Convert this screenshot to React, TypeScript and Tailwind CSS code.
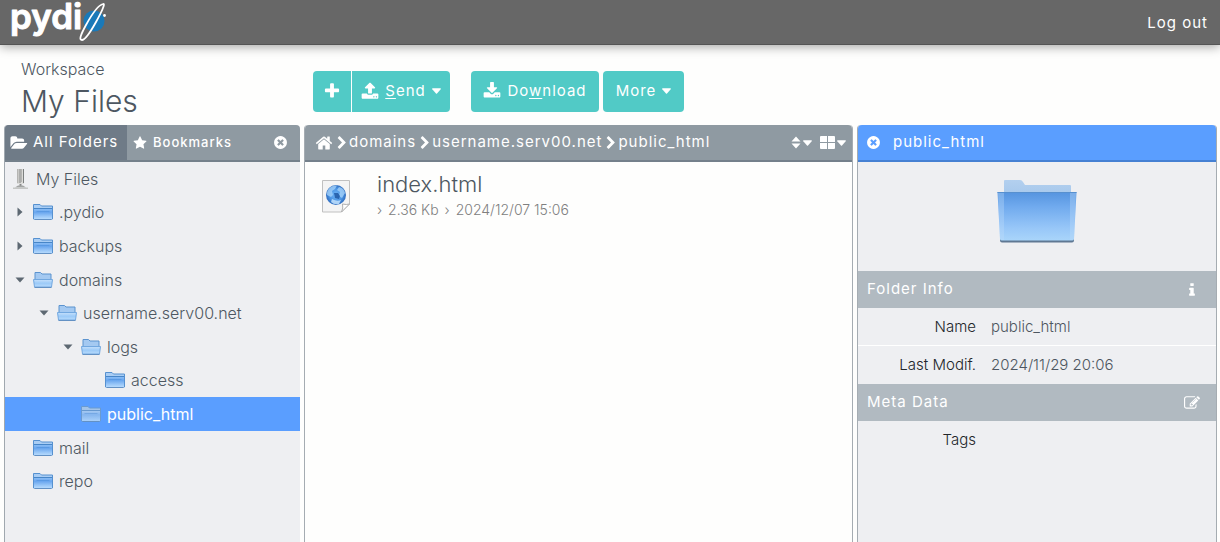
import type { ReactNode } from "react";

const PATHS = {
  plus: "M1600 736v192q0 40-28 68t-68 28h-416v416q0 40-28 68t-68 28h-192q-40 0-68-28t-28-68v-416h-416q-40 0-68-28t-28-68v-192q0-40 28-68t68-28h416v-416q0-40 28-68t68-28h192q40 0 68 28t28 68v416h416q40 0 68 28t28 68z",
  upload:
    "M1344 1472q0-26-19-45t-45-19-45 19-19 45 19 45 45 19 45-19 19-45zm256 0q0-26-19-45t-45-19-45 19-19 45 19 45 45 19 45-19 19-45zm128-224v320q0 40-28 68t-68 28h-1472q-40 0-68-28t-28-68v-320q0-40 28-68t68-28h427q21 56 70.5 92t110.5 36h256q61 0 110.5-36t70.5-92h427q40 0 68 28t28 68zm-325-648q-17 40-59 40h-256v448q0 26-19 45t-45 19h-256q-26 0-45-19t-19-45v-448h-256q-42 0-59-40-17-39 14-69l448-448q18-19 45-19t45 19l448 448q31 30 14 69z",
  download:
    "M1344 1344q0-26-19-45t-45-19-45 19-19 45 19 45 45 19 45-19 19-45zm256 0q0-26-19-45t-45-19-45 19-19 45 19 45 45 19 45-19 19-45zm128-224v320q0 40-28 68t-68 28h-1472q-40 0-68-28t-28-68v-320q0-40 28-68t68-28h465l135 136q58 56 136 56t136-56l136-136h464q40 0 68 28t28 68zm-325-569q17 41-14 70l-448 448q-18 19-45 19t-45-19l-448-448q-31-29-14-70 17-39 59-39h256v-448q0-26 19-45t45-19h256q26 0 45 19t19 45v448h256q42 0 59 39z",
  home: "M1472 992v480q0 26-19 45t-45 19h-384v-384h-256v384h-384q-26 0-45-19t-19-45v-480q0-1 .5-3t.5-3l575-474 575 474q1 2 1 6zm223-69l-62 74q-8 9-21 11h-3q-13 0-21-7l-692-577-692 577q-12 8-24 7-13-2-21-11l-62-74q-8-10-7-23.5t11-21.5l719-599q32-26 76-26t76 26l244 204v-195q0-14 9-23t23-9h192q14 0 23 9t9 23v408l219 182q10 8 11 21.5t-7 23.5z",
  close:
    "M1277 1122q0-26-19-45l-181-181 181-181q19-19 19-45 0-27-19-46l-90-90q-19-19-46-19-26 0-45 19l-181 181-181-181q-19-19-45-19-27 0-46 19l-90 90q-19 19-19 46 0 26 19 45l181 181-181 181q-19 19-19 45 0 27 19 46l90 90q19 19 46 19 26 0 45-19l181-181 181 181q19 19 45 19 27 0 46-19l90-90q19-19 19-46zm387-226q0 209-103 385.5t-279.5 279.5-385.5 103-385.5-103-279.5-279.5-103-385.5 103-385.5 279.5-279.5 385.5-103 385.5 103 279.5 279.5 103 385.5z",
  edit: "M888 1184l116-116-152-152-116 116v56h96v96h56zm440-720q-16-16-33 1l-350 350q-17 17-1 33t33-1l350-350q17-17 1-33zm80 594v190q0 119-84.5 203.5t-203.5 84.5h-832q-119 0-203.5-84.5t-84.5-203.5v-832q0-119 84.5-203.5t203.5-84.5h832q63 0 117 25 15 7 18 23 3 17-9 29l-49 49q-14 14-32 8-23-6-45-6h-832q-66 0-113 47t-47 113v832q0 66 47 113t113 47h832q66 0 113-47t47-113v-126q0-13 9-22l64-64q15-15 35-7t20 29zm-96-738l288 288-672 672h-288v-288zm444 132l-92 92-288-288 92-92q28-28 68-28t68 28l152 152q28 28 28 68t-28 68z",
  folderOpen:
    "M1815 952q0 31-31 66l-336 396q-43 51-120.5 86.5t-143.5 35.5h-1088q-34 0-60.5-13t-26.5-43q0-31 31-66l336-396q43-51 120.5-86.5t143.5-35.5h1088q34 0 60.5 13t26.5 43zm-343-344v160h-832q-94 0-197 47.5t-164 119.5l-337 396-5 6q0-4-.5-12.5t-.5-12.5v-960q0-92 66-158t158-66h320q92 0 158 66t66 158v32h544q92 0 158 66t66 158z",
  star: "M1728 647q0 22-26 48l-363 354 86 500q1 7 1 20 0 21-10.5 35.5t-30.5 14.5q-19 0-40-12l-449-236-449 236q-22 12-40 12-21 0-31.5-14.5t-10.5-35.5q0-6 2-20l86-500-364-354q-25-27-25-48 0-37 56-46l502-73 225-455q19-41 49-41t49 41l225 455 502 73q56 9 56 46z",
  chevron:
    "M1363 877l-742 742q-19 19-45 19t-45-19l-166-166q-19-19-19-45t19-45l531-531-531-531q-19-19-19-45t19-45l166-166q19-19 45-19t45 19l742 742q19 19 19 45t-19 45z",
  info: "M1216 1344v128q0 26-19 45t-45 19h-512q-26 0-45-19t-19-45v-128q0-26 19-45t45-19h64v-384h-64q-26 0-45-19t-19-45v-128q0-26 19-45t45-19h384q26 0 45 19t19 45v576h64q26 0 45 19t19 45zm-128-1152v192q0 26-19 45t-45 19h-256q-26 0-45-19t-19-45v-192q0-26 19-45t45-19h256q26 0 45 19t19 45z",
};

function Icon({ name, className = "size-4" }: { name: keyof typeof PATHS; className?: string }) {
  return (
    <svg viewBox="0 0 1792 1792" fill="currentColor" aria-hidden="true" className={`shrink-0 overflow-visible ${className}`}>
      <path d={PATHS[name]} />
    </svg>
  );
}

function Caret() {
  return (
    <svg viewBox="0 0 9 6" fill="currentColor" aria-hidden="true" className="h-[6px] w-[9px] shrink-0">
      <path d="M.6.3h7.8q.8.3.3 1L5 5.400q-.5.500-1 0L.3 1.300Q-.2.600.6.300z" />
    </svg>
  );
}

function Logo() {
  return (
    <svg viewBox="0 0 100 40" className="h-10 w-[100px] overflow-visible" role="img" aria-label="pydio">
      <text
        x="2"
        y="27"
        fontFamily="Inter, sans-serif"
        fontWeight="600"
        fontSize="35"
        fill="#fff"
        stroke="#fff"
        strokeWidth="1"
        strokeLinejoin="round"
      >
        pydi
      </text>
      <circle cx="86" cy="19" r="10.5" fill="#1a79b8" />
      <g fill="none" stroke="#fff" strokeWidth="1.8">
        <path d="M95 2C91 3 84 12 78 23S71 38 74 38s9-9 14-18S98 1 95 2z" />
      </g>
      <circle cx="96.5" cy="13.5" r="1.4" fill="#fff" />
    </svg>
  );
}

function SmallFolder({ open = false, faded = false }: { open?: boolean; faded?: boolean }) {
  return (
    <svg viewBox="0 0 20 18" aria-hidden="true" className="h-[18px] w-5 shrink-0">
      <defs>
        <linearGradient id="small-front" x1="0" y1="0" x2="0" y2="1">
          <stop offset="0" stopColor="#8fc0f6" />
          <stop offset=".35" stopColor="#68a5ee" />
          <stop offset=".8" stopColor="#9fcbf9" />
          <stop offset="1" stopColor="#b4d9fd" />
        </linearGradient>
        <linearGradient id="small-faded" x1="0" y1="0" x2="0" y2="1">
          <stop offset="0" stopColor="#a9cbf2" />
          <stop offset=".4" stopColor="#86b6ef" />
          <stop offset="1" stopColor="#a9d0f9" />
        </linearGradient>
        <linearGradient id="small-open" x1="0" y1="0" x2="0" y2="1">
          <stop offset="0" stopColor="#c6e0fb" />
          <stop offset=".5" stopColor="#9bcaf8" />
          <stop offset="1" stopColor="#b9dbfc" />
        </linearGradient>
      </defs>
      {open ? (
        <>
          <path d="M2 9V1.500h5.500l1.500 1.500H18v6z" fill="#a4c9f1" stroke="#5b93cf" />
          <path d="M.5 8.500h19L18.500 16h-17z" fill="url(#small-open)" stroke="#72a8e0" />
        </>
      ) : (
        <>
          <path
            d="M.5 16V1.500h6.500l1.500 1.500h11V16z"
            fill={faded ? "#a3c4ea" : "#a9cdf4"}
            stroke={faded ? "#6b9bd0" : "#5691d0"}
          />
          <path d="M1 5.500h18V16H1z" fill={faded ? "url(#small-faded)" : "url(#small-front)"} />
          <path d="M1 5.500h18" stroke={faded ? "#6799d0" : "#4786c8"} />
          <path d="M3.500 8.500h13" stroke={faded ? "#75a8e4" : "#5a9ae4"} />
        </>
      )}
      <path d="M1.500 16.500h17" stroke="#6391c4" />
    </svg>
  );
}

function LargeFolder() {
  return (
    <svg viewBox="0 0 80 65" role="img" aria-label="Folder" className="h-[65px] w-20">
      <defs>
        <linearGradient id="large-back" x1="0" y1="0" x2="0" y2="1">
          <stop offset="0" stopColor="#b3d0ef" />
          <stop offset="1" stopColor="#83b1e3" />
        </linearGradient>
        <linearGradient id="large-front" x1="0" y1="0" x2="0" y2="1">
          <stop offset="0" stopColor="#5594df" />
          <stop offset=".3" stopColor="#70aaee" />
          <stop offset=".75" stopColor="#98c7f8" />
          <stop offset="1" stopColor="#a9d5fa" />
        </linearGradient>
      </defs>
      <path d="M3 60h74v1.500q0 2-2 2H5q-2 0-2-2z" fill="#5f7893" />
      <path d="M7 60V2q0-1 1-1h15q2 0 3 2l2 3h45q1 0 1 1v53z" fill="url(#large-back)" />
      <path d="M.5 13h79L77 60q0 1.500-2 1.500H5q-2 0-2-1.500z" fill="url(#large-front)" />
      <path d="M1 14h6v47H5q-2 0-2-2zM73 14h6l-2 45q0 2-2 2h-2z" fill="#c1def9" opacity=".35" />
      <path d="M.5 13.500h79" stroke="#5790cf" />
    </svg>
  );
}

function DriveIcon() {
  return (
    <svg viewBox="0 0 15 22" aria-hidden="true" className="h-[22px] w-[15px] shrink-0">
      <path d="M4 1h7v15H4z" fill="#dcdcda" />
      <path d="M4 1h1.500v14H4zM8 1h1v13H8z" fill="#b5b5b3" />
      <path d="M6.500 1h1v14h-1zM10 1h1v14h-1z" fill="#7c7f7f" />
      <path d="M6.500 16h2v3h-2z" fill="#888" />
      <path d="M5 17.500h5l3 2H2z" fill="#a2a4a3" />
      <path d="M0 19.500h15V21H0z" fill="#c5c6c5" />
    </svg>
  );
}

function WebFileIcon() {
  return (
    <svg viewBox="0 0 30 34" aria-hidden="true" className="h-[34px] w-[30px] shrink-0">
      <defs>
        <radialGradient id="globe" cx=".5" cy=".5" r=".55">
          <stop offset="0" stopColor="#6fb6f8" />
          <stop offset=".6" stopColor="#4b93e2" />
          <stop offset="1" stopColor="#2560b4" />
        </radialGradient>
      </defs>
      <path d="M1.500 1.500h27V25l-8 8h-19z" fill="#f4f4f4" stroke="#c0c0c0" />
      <path d="M28.500 25q-3 1-7 0 1 4-1 8z" fill="#fff" stroke="#b0b0b0" />
      <circle cx="15" cy="16" r="10" fill="url(#globe)" />
      <path d="M7 11q3-5 9-4.500l-2 3.500-3 2 1 4-2 2-4-2q-.5-3 1-5zM18 8q5 1 6 6l-3 5-3-2 1-4-3-2z" fill="#a9d5fb" opacity=".75" />
      <path d="M11 20q5 3 9 1l-2 4q-5 1-8-2z" fill="#cbe7ff" opacity=".8" />
      <path d="M13 14h4l2 3-1 3-4-1z" fill="#1b529f" opacity=".8" />
    </svg>
  );
}

function ToolButton({ children, className = "" }: { children: ReactNode; className?: string }) {
  return (
    <button
      type="button"
      className={`flex h-[41px] items-center justify-center gap-1.5 bg-[#51cac6] text-[15px] tracking-[1px] text-white ${className}`}
    >
      {children}
    </button>
  );
}

type Node = { label: string; depth: number; state?: "open" | "closed"; selected?: boolean };

const NODES: Node[] = [
  { label: ".pydio", depth: 0, state: "closed" },
  { label: "backups", depth: 0, state: "closed" },
  { label: "domains", depth: 0, state: "open" },
  { label: "username.serv00.net", depth: 1, state: "open" },
  { label: "logs", depth: 2, state: "open" },
  { label: "access", depth: 3 },
  { label: "public_html", depth: 2, selected: true },
  { label: "mail", depth: 0 },
  { label: "repo", depth: 0 },
];

const INDENT = ["pl-2.5", "pl-[34px]", "pl-[58px]", "pl-[82px]"];

function TreeRow({ node }: { node: Node }) {
  return (
    <li className={`flex items-center ${INDENT[node.depth]} ${node.selected ? "bg-[#5a9eff] font-normal text-white" : ""}`}>
      <span className="flex w-[18px] shrink-0">
        {node.state && (
          <svg viewBox="0 0 10 10" fill="#5d6872" aria-hidden="true" className="size-2.5">
            {node.state === "open" ? <path d="M.5 2.500h9L5 7.500z" /> : <path d="M2.500.5v9L7.500 5z" />}
          </svg>
        )}
      </span>
      <SmallFolder open={node.state === "open"} faded={node.selected} />
      <span className="ml-1.5">{node.label}</span>
    </li>
  );
}

const BAR = "flex h-[37px] shrink-0 items-center rounded-t-sm border-b-2 text-white tracking-[1px]";

function SectionBar({ title, children }: { title: string; children: ReactNode }) {
  return (
    <div className="flex h-[37px] items-center justify-between bg-[#b1bac1] pr-3.5 pl-[9px] text-white">
      <h2 className="text-[15px] tracking-[1px]">{title}</h2>
      <span className="flex min-w-5 justify-center">{children}</span>
    </div>
  );
}

function Field({ label, value }: { label: string; value?: string }) {
  return (
    <div className="flex h-[38px] items-center gap-[15px] border-b border-white pt-px text-[15px] font-light last:border-b-0">
      <dt className="w-[118px] text-right text-[#22262a]">{label}</dt>
      <dd className="text-[#4d5660]">{value}</dd>
    </div>
  );
}

export default function App() {
  return (
    <div className="flex min-h-screen flex-col bg-[#fefefd] font-['Inter','Noto_Sans',sans-serif] text-base text-[#4d5761]">
      <header className="flex h-[45px] shrink-0 items-center justify-between border-b border-[#555] bg-[#676767] pr-3 pl-2 shadow-[0_2px_10px_rgba(0,0,0,0.35)]">
        <Logo />
        <a href="#logout" className="pt-0.5 text-[15px] tracking-[1px] text-white">
          Log out
        </a>
      </header>

      <div className="flex h-20 shrink-0 items-center pl-[21px]">
        <div className="w-[292px] pt-2 font-light">
          <p className="text-base leading-6">Workspace</p>
          <h1 className="text-[30px] leading-10">My Files</h1>
        </div>
        <div className="flex pt-3">
          <ToolButton className="mr-px w-[38px] rounded-l-sm">
            <Icon name="plus" className="size-[18px]" />
          </ToolButton>
          <ToolButton className="w-[98px] rounded-r-sm">
            <Icon name="upload" className="size-[18px]" />
            <span>
              <u className="underline-offset-2">S</u>end
            </span>
            <Caret />
          </ToolButton>
          <ToolButton className="ml-[21px] w-32 rounded-sm">
            <Icon name="download" className="size-[18px]" />
            <span>
              Do<u className="underline-offset-2">w</u>nload
            </span>
          </ToolButton>
          <ToolButton className="ml-1 w-[81px] rounded-sm">
            More
            <Caret />
          </ToolButton>
        </div>
      </div>

      <main className="grid flex-1 grid-cols-[296px_minmax(0,1fr)_360px] gap-1 pr-[3px] pl-1">
        <aside className="flex flex-col rounded-t-sm border-l border-[#a0a8af] bg-[#eeeff2]">
          <div className={`${BAR} border-[#74808b] bg-[#8f9aa2]`}>
            <button type="button" className="flex h-full w-[122px] items-center gap-1.5 rounded-tl-sm bg-[#6f7b87] pl-1.5 text-[15px]">
              <Icon name="folderOpen" />
              All Folders
            </button>
            <button type="button" className="flex flex-1 items-center gap-1.5 pl-1.5 text-[13px] font-medium">
              <Icon name="star" className="size-3.5" />
              Bookmarks
            </button>
            <button type="button" aria-label="Close folders panel" className="mr-3">
              <Icon name="close" className="size-[15px]" />
            </button>
          </div>
          <ul className="grid h-[336px] auto-rows-fr font-light">
            <li className="flex items-center pl-2">
              <DriveIcon />
              <span className="ml-2">My Files</span>
            </li>
            {NODES.map((node) => (
              <TreeRow key={node.label} node={node} />
            ))}
          </ul>
        </aside>

        <section className="flex flex-col rounded-t-sm border-x border-[#a5acb2]">
          <div className={`${BAR} border-[#74808b] bg-[#8f9aa2] pr-1.5 pl-2.5 text-[15px]`}>
            <nav className="flex flex-1 items-center" aria-label="Path">
              <a href="#home" aria-label="Home">
                <Icon name="home" className="size-[18px]" />
              </a>
              {["domains", "username.serv00.net", "public_html"].map((part) => (
                <span key={part} className="flex items-center">
                  <Icon name="chevron" className="ml-0.5 size-3.5" />
                  <a href={`#${part}`}>{part}</a>
                </span>
              ))}
            </nav>
            <button type="button" aria-label="Sort" className="flex items-center gap-0.5">
              <svg viewBox="0 0 10 13" fill="currentColor" aria-hidden="true" className="h-[13px] w-2.5">
                <path d="M5 .5L9.500 5.500H.5zM5 12.500L.5 7.500h9z" />
              </svg>
              <Caret />
            </button>
            <button type="button" aria-label="Display" className="ml-2 flex items-center gap-0.5">
              <svg viewBox="0 0 15 13" fill="currentColor" aria-hidden="true" className="h-[13px] w-[15px]">
                <path d="M1 0h6v6H0V1q0-1 1-1zM8 0h6q1 0 1 1v5H8zM0 7h7v6H1q-1 0-1-1zM8 7h7v5q0 1-1 1H8z" />
              </svg>
              <Caret />
            </button>
          </div>
          <article className="flex items-center gap-[26px] pt-2 pl-4">
            <WebFileIcon />
            <div>
              <h2 className="text-[22px] leading-7 font-light">index.html</h2>
              <p className="flex gap-1.5 text-sm leading-6 font-light text-[#808080]">
                <span>›</span>
                <span>2.36 Kb</span>
                <span>›</span>
                <span>2024/12/07 15:06</span>
              </p>
            </div>
          </article>
        </section>

        <aside className="flex flex-col rounded-t-sm border-x border-[#a5acb2] bg-[#eeeff2]">
          <div className={`${BAR} gap-3 border-[#4580d3] bg-[#5a9eff] pl-2 text-[15px]`}>
            <button type="button" aria-label="Close info panel">
              <Icon name="close" className="size-[15px]" />
            </button>
            <h2>public_html</h2>
          </div>
          <div className="flex h-[109px] items-center justify-center pb-2.5">
            <LargeFolder />
          </div>
          <SectionBar title="Folder Info">
            <Icon name="info" />
          </SectionBar>
          <dl>
            <Field label="Name" value="public_html" />
            <Field label="Last Modif." value="2024/11/29 20:06" />
          </dl>
          <SectionBar title="Meta Data">
            <button type="button" aria-label="Edit meta data">
              <Icon name="edit" />
            </button>
          </SectionBar>
          <dl>
            <Field label="Tags" />
          </dl>
        </aside>
      </main>
    </div>
  );
}
